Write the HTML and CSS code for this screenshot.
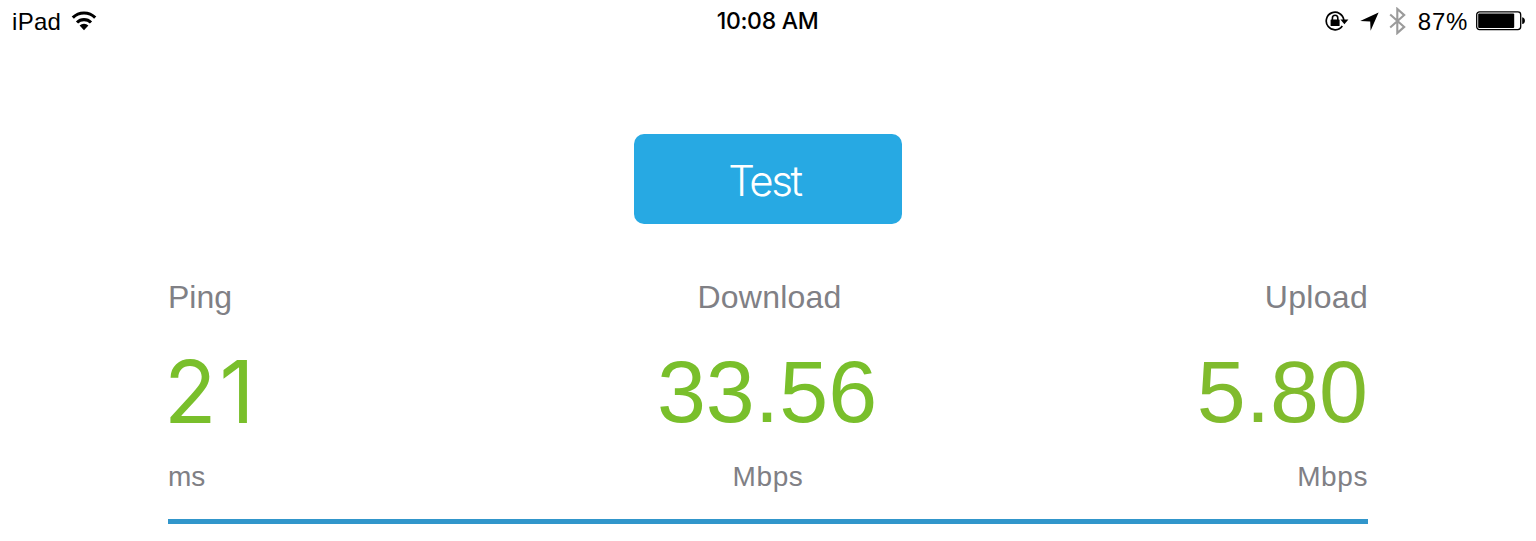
FILE: index.html
```html
<!DOCTYPE html>
<html lang="en">
  <head>
    <meta charset="UTF-8" />
    <meta name="viewport" content="width=device-width, initial-scale=1.0" />
    <title>Speed Test</title>
    <link rel="stylesheet" href="styles.css">
  </head>
  <body>
    <header class="status-bar">
      <div class="status-left">
        <span>iPad</span>
        <svg class="icon-wifi" width="26" height="20" viewBox="0 0 26 20">
          <g fill="none" stroke="#000" stroke-width="3.1">
            <path d="M1.8 6.6a15.8 15.8 0 0 1 22.4 0" />
            <path d="M6 11.5a9.9 9.9 0 0 1 14 0" />
          </g>
          <path d="M13 19.2l-4.4-4.6a6.2 6.2 0 0 1 8.8 0z" />
        </svg>
      </div>
      <span class="status-time">10:08 AM</span>
      <div class="status-right">
        <svg class="icon-lock" width="24" height="20" viewBox="0 0 24 20">
          <path d="M17.3 15A8.8 8.8 0 1 1 18.8 9" fill="none" stroke="#000" stroke-width="1.7" />
          <path d="M15.4 8.6h8l-4 4.6z" />
          <rect x="5.6" y="8.5" width="9" height="6.6" rx="0.6" />
          <path d="M7.4 9V7a2.7 2.7 0 0 1 5.4 0V9" fill="none" stroke="#000" stroke-width="1.6" />
        </svg>
        <svg class="icon-location" width="19" height="19" viewBox="0 0 19 19">
          <path d="M18.6 0.6L10.6 18.8L10.2 9.5L0.2 9z" />
        </svg>
        <svg class="icon-bluetooth" width="17" height="28" viewBox="0 0 17 28">
          <path d="M1.2 7.5l14 12.4l-6.9 6.2V1.9l6.9 6.2l-14 12.4" fill="none" stroke="#9b9b9b" stroke-width="2.1" />
        </svg>
        <span class="battery-level">87%</span>
        <svg class="icon-battery" width="50" height="20" viewBox="0 0 50 20">
          <rect x="0.7" y="0.9" width="44" height="17.7" rx="2.8" fill="none" stroke="#000" stroke-width="1.3" />
          <rect x="2.2" y="2.4" width="36" height="14.7" rx="1" />
          <path d="M46.2 6.3c1.8.4 2.7 1.7 2.7 3.4s-.9 3-2.7 3.4z" />
        </svg>
      </div>
    </header>

    <main class="container">
      <button class="test-btn">Test</button>

      <div class="results">
        <div class="result ping">
          <p class="label">Ping</p>
          <p class="value">21</p>
          <p class="unit">ms</p>
        </div>
        <div class="result download">
          <p class="label">Download</p>
          <p class="value">33.56</p>
          <p class="unit">Mbps</p>
        </div>
        <div class="result upload">
          <p class="label">Upload</p>
          <p class="value">5.80</p>
          <p class="unit">Mbps</p>
        </div>
      </div>
    </main>
  </body>
</html>
```

FILE: styles.css
```css
/* Reset & Base Styles */
* {
  margin: 0;
  padding: 0;
  box-sizing: border-box;
}

body {
  background-color: #fff;
  color: #000;
  font-family: "Liberation Sans", Arial, sans-serif;
}

svg {
  display: block;
  flex-shrink: 0;
}

/* Status bar */
.status-bar {
  display: grid;
  grid-template-columns: 1fr auto 1fr;
  height: 41px;
  padding: 0 10px 0 12px;
  font-size: 24px;
  line-height: 41px;
}

.status-left,
.status-right {
  display: flex;
  align-items: center;
}

.status-left {
  gap: 10px;
  letter-spacing: 0.3px;
}

.status-right {
  justify-content: flex-end;
}

.status-time {
  padding: 1px 3px 0 0;
  font-family: Inter, sans-serif;
  font-size: 23px;
  font-weight: 500;
  letter-spacing: -0.3px;
}

.icon-lock {
  margin-right: 11px;
}

.icon-location {
  margin-right: 10px;
}

.icon-bluetooth {
  margin-right: 12px;
}

.battery-level {
  margin-right: 8px;
  letter-spacing: 0.7px;
}

/* Test button */
.container {
  width: 1200px;
  margin: 0 auto;
  padding-top: 93px;
}

.test-btn {
  display: block;
  width: 268px;
  height: 90px;
  margin: 0 auto;
  padding: 2px 7px 0 0;
  background-color: #27a9e3;
  color: #fff;
  border: none;
  border-radius: 10px;
  cursor: pointer;
  font-family: Inter, sans-serif;
  font-size: 42px;
  font-weight: 300;
  letter-spacing: -2.4px;
}

/* Results */
.results {
  display: grid;
  grid-template-columns: 1fr 1fr 1fr;
  margin-top: 55px;
  padding-bottom: 26px;
  border-bottom: 5px solid #3196cb;
}

.download {
  text-align: center;
}

.upload {
  text-align: right;
}

.label {
  color: #808085;
  font-size: 32px;
  line-height: 36px;
}

.download .label {
  padding-left: 3px;
  letter-spacing: 0.2px;
}

.upload .label {
  letter-spacing: 0.3px;
}

.value {
  margin-top: 27px;
  color: #79bf2b;
  font-size: 88px;
  line-height: 100px;
}

.ping .value {
  margin-left: -4px;
  font-family: Inter, sans-serif;
  font-size: 86px;
  letter-spacing: 3px;
}

.download .value {
  padding-right: 2px;
}

.upload .value {
  color: #80bb2d;
}

.unit {
  margin-top: 19px;
  color: #808085;
  font-size: 28px;
  line-height: 32px;
  letter-spacing: 0.6px;
}

.ping .unit {
  letter-spacing: 0;
}
```
